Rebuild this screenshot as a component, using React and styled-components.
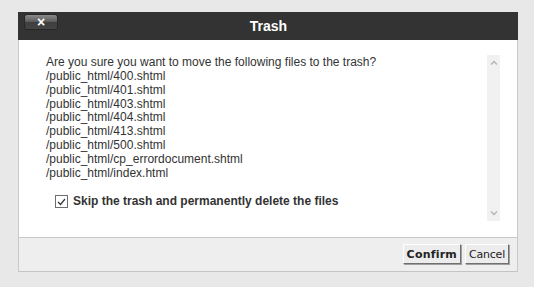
import React from 'react'
import styled, { createGlobalStyle } from 'styled-components'

const GlobalStyle = createGlobalStyle`
  body {
    margin: 0;
    background: #e8e8e8;
    font-family: "Liberation Sans", Arial, sans-serif;
  }
`

const Page = styled.div`
  padding: 12px 0 0 18px;
  height: 275px;
`

const Dialog = styled.div`
  width: 500px;
  border-left: 1px solid #c9c9c9;
  border-right: 1px solid #c9c9c9;
  border-bottom: 1px solid #c4c4c4;
  box-sizing: border-box;
  background: #fff;
`

const TitleBar = styled.div`
  position: relative;
  height: 28px;
  background: #333;
  display: flex;
  align-items: center;
  justify-content: center;
  margin: 0 -1px;
`

const Title = styled.h1`
  margin: 0;
  font-size: 14px;
  font-weight: bold;
  color: #fff;
  padding-left: 1px;
`

const CloseButton = styled.button`
  position: absolute;
  left: 6px;
  top: 2px;
  width: 34px;
  height: 16px;
  padding: 0;
  border: 1px solid #262626;
  border-radius: 3px;
  background: linear-gradient(#8a8a8a, #5a5a5a 50%, #3e3e3e 51%, #444);
  color: #fff;
  font: bold 14px/14px "Liberation Sans", Arial, sans-serif;
`

const Body = styled.div`
  height: 197px;
  padding: 15px 17px 0 27px;
  box-sizing: border-box;
  display: flex;
  gap: 8px;
`

const Content = styled.div`
  flex: 1;
  padding-top: 1px;
  font-size: 12px;
  line-height: 13.85px;
  color: #333;
`

const Line = styled.div`
  white-space: nowrap;
`

const SkipRow = styled.label`
  display: flex;
  align-items: center;
  gap: 5px;
  margin: 14px 0 0 9px;
  font-weight: bold;
  color: #333;
`

const Box = styled.span`
  width: 11px;
  height: 11px;
  border: 1px solid #6d6d6d;
  background: #fff;
  display: flex;
  align-items: center;
  justify-content: center;
`

const Scrollbar = styled.div`
  width: 13px;
  height: 166px;
  background: #f1f1f1;
  display: flex;
  flex-direction: column;
  justify-content: space-between;
  align-items: center;
  padding: 5px 0;
  box-sizing: border-box;
`

const Footer = styled.div`
  height: 34px;
  border-top: 1px solid #c8c8c8;
  background: #eeeeee;
  display: flex;
  justify-content: flex-end;
  align-items: center;
  gap: 4px;
  padding: 0 8px 1px 0;
  box-sizing: border-box;
`

const Button = styled.button`
  height: 20px;
  padding: 0 3px;
  background: #ececec;
  border: 1px solid;
  border-color: #fff #707070 #707070 #fff;
  box-shadow: 1px 1px 0 #a0a0a0;
  color: #222;
  font-family: "DejaVu Sans", Tahoma, sans-serif;
  font-size: 11px;
  font-weight: ${p => (p.$primary ? 'bold' : 'normal')};
  letter-spacing: ${p => (p.$primary ? '0.2px' : '-0.2px')};
`

const Chevron = ({ up }) => (
  <svg width="8" height="5" viewBox="0 0 8 5">
    <path
      d={up ? 'M1 4.5L4 1.5L7 4.5' : 'M1 0.5L4 3.5L7 0.5'}
      fill="none"
      stroke="#b3b3b3"
      strokeWidth="1.3"
    />
  </svg>
)

const files = [
  '/public_html/400.shtml',
  '/public_html/401.shtml',
  '/public_html/403.shtml',
  '/public_html/404.shtml',
  '/public_html/413.shtml',
  '/public_html/500.shtml',
  '/public_html/cp_errordocument.shtml',
  '/public_html/index.html',
]

export default function App() {
  return (
    <Page>
      <GlobalStyle />
      <Dialog>
        <TitleBar>
          <CloseButton>×</CloseButton>
          <Title>Trash</Title>
        </TitleBar>
        <Body>
          <Content>
            <Line>Are you sure you want to move the following files to the trash?</Line>
            {files.map(f => (
              <Line key={f}>{f}</Line>
            ))}
            <SkipRow>
              <Box>
                <svg width="9" height="8" viewBox="0 0 9 8">
                  <path d="M1 4L3.5 6.5L8 1" fill="none" stroke="#333" strokeWidth="1.2" />
                </svg>
              </Box>
              Skip the trash and permanently delete the files
            </SkipRow>
          </Content>
          <Scrollbar>
            <Chevron up />
            <Chevron />
          </Scrollbar>
        </Body>
        <Footer>
          <Button $primary>Confirm</Button>
          <Button>Cancel</Button>
        </Footer>
      </Dialog>
    </Page>
  )
}
